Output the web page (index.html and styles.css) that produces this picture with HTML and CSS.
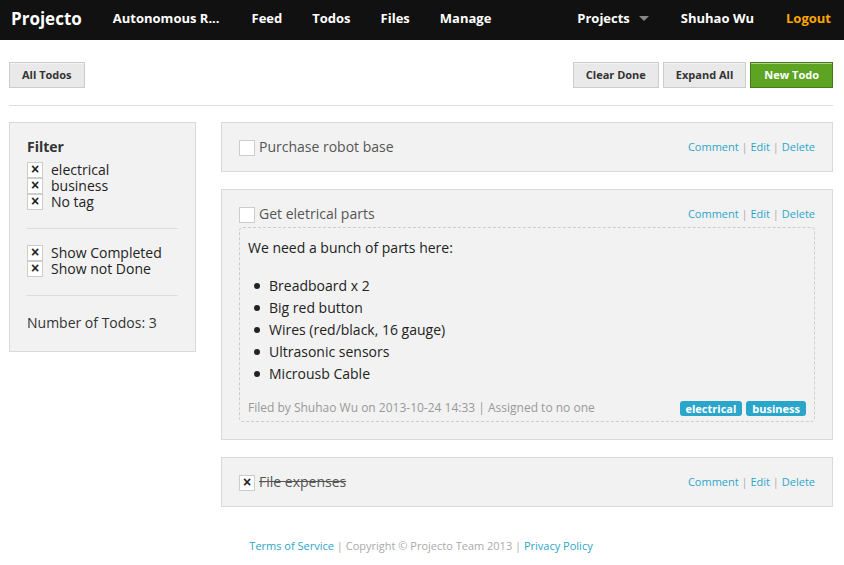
FILE: index.html
```html
<!DOCTYPE html>
<html lang="en">
<head>
<meta charset="utf-8">
<meta name="viewport" content="width=device-width, initial-scale=1">
<title>Projecto</title>
<link rel="stylesheet" href="styles.css">
</head>
<body>
<nav class="topbar">
  <a class="brand" href="#">Projecto</a>
  <a class="nav-link project-name" href="#">Autonomous R...</a>
  <a class="nav-link" href="#">Feed</a>
  <a class="nav-link" href="#">Todos</a>
  <a class="nav-link" href="#">Files</a>
  <a class="nav-link" href="#">Manage</a>
  <div class="nav-right">
    <a class="nav-link has-menu" href="#">Projects</a>
    <a class="nav-link" href="#">Shuhao Wu</a>
    <a class="nav-link logout" href="#">Logout</a>
  </div>
</nav>

<div class="page">
  <div class="toolbar">
    <button class="btn" type="button">All Todos</button>
    <div class="toolbar-actions">
      <button class="btn" type="button">Clear Done</button>
      <button class="btn" type="button">Expand All</button>
      <button class="btn btn-primary" type="button">New Todo</button>
    </div>
  </div>

  <div class="columns">
    <aside class="panel">
      <h2 class="filter-title">Filter</h2>
      <label class="option"><input class="check" type="checkbox" checked>electrical</label>
      <label class="option"><input class="check" type="checkbox" checked>business</label>
      <label class="option"><input class="check" type="checkbox" checked>No tag</label>
      <hr class="rule">
      <label class="option"><input class="check" type="checkbox" checked>Show Completed</label>
      <label class="option"><input class="check" type="checkbox" checked>Show not Done</label>
      <hr class="rule">
      <p class="count">Number of Todos: 3</p>
    </aside>

    <main class="todos">
      <article class="todo">
        <header class="todo-head">
          <label class="todo-title"><input class="check" type="checkbox">Purchase robot base</label>
          <div class="actions"><a href="#">Comment</a> | <a href="#">Edit</a> | <a href="#">Delete</a></div>
        </header>
      </article>

      <article class="todo">
        <header class="todo-head">
          <label class="todo-title"><input class="check" type="checkbox">Get eletrical parts</label>
          <div class="actions"><a href="#">Comment</a> | <a href="#">Edit</a> | <a href="#">Delete</a></div>
        </header>
        <div class="details">
          <p class="intro">We need a bunch of parts here:</p>
          <ul class="parts">
            <li>Breadboard x 2</li>
            <li>Big red button</li>
            <li>Wires (red/black, 16 gauge)</li>
            <li>Ultrasonic sensors</li>
            <li>Microusb Cable</li>
          </ul>
          <footer class="meta">
            <span>Filed by Shuhao Wu on 2013-10-24 14:33 | Assigned to no one</span>
            <div class="tags"><span class="tag">electrical</span><span class="tag">business</span></div>
          </footer>
        </div>
      </article>

      <article class="todo">
        <header class="todo-head">
          <label class="todo-title"><input class="check" type="checkbox" checked><s>File expenses</s></label>
          <div class="actions"><a href="#">Comment</a> | <a href="#">Edit</a> | <a href="#">Delete</a></div>
        </header>
      </article>
    </main>
  </div>

  <footer class="site-footer"><a href="#">Terms of Service</a> | Copyright © Projecto Team 2013 | <a href="#">Privacy Policy</a></footer>
</div>
</body>
</html>
```
FILE: styles.css
```css
* {
  box-sizing: border-box;
}

body {
  margin: 0;
  background: #fff;
  color: #222;
  font-family: "Open Sans", sans-serif;
  font-size: 14px;
}

a {
  color: #2ba6cb;
  text-decoration: none;
}

h2, p, ul {
  margin: 0;
  padding: 0;
}

.topbar {
  display: flex;
  align-items: center;
  height: 40px;
  padding: 0 11px 4px;
  background: #111;
}

.brand {
  margin-right: 16px;
  color: #fff;
  font-size: 17px;
  font-weight: bold;
}

.nav-link {
  padding: 0 15px;
  color: #fff;
  font-size: 13px;
  font-weight: bold;
  white-space: nowrap;
}

.project-name {
  margin-right: 2px;
}

.nav-right {
  display: flex;
  gap: 2px;
  margin-left: auto;
  margin-right: -13px;
}

.has-menu {
  display: flex;
  align-items: center;
  gap: 9px;
}

.has-menu::after {
  content: "";
  border: 5px solid transparent;
  border-top-color: #888;
  border-bottom: 0;
}

.nav-link.logout {
  color: #ffa500;
}

.page {
  padding: 22px 11px 0 9px;
}

.toolbar {
  display: flex;
  justify-content: space-between;
  padding-bottom: 17px;
  border-bottom: 1px solid #ddd;
}

.toolbar-actions {
  display: flex;
  gap: 4px;
}

.btn {
  height: 26px;
  padding: 0 12px 2px;
  border: 1px solid #ccc;
  background: #e9e9e9;
  box-shadow: inset 0 1px 0 rgba(255, 255, 255, 0.5);
  color: #333;
  font-family: inherit;
  font-size: 11px;
  font-weight: bold;
}

.btn-primary {
  padding: 0 13px 2px;
  border-color: #457a1a;
  background: #5da423;
  color: #fff;
}

.columns {
  display: grid;
  grid-template-columns: 187px minmax(0, 1fr);
  gap: 25px;
  align-items: start;
  margin-top: 16px;
}

.panel, .todo {
  border: 1px solid #d9d9d9;
  background: #f2f2f2;
}

.panel {
  padding: 17px;
}

.filter-title {
  margin-bottom: 8px;
  color: #333;
  font-size: 14px;
  line-height: 14px;
}

.option {
  display: flex;
  align-items: center;
  gap: 8px;
  line-height: 16px;
}

.check {
  display: grid;
  place-items: center;
  flex: none;
  width: 16px;
  height: 16px;
  margin: 0;
  border: 1px solid #ccc;
  background: #fff;
  appearance: none;
}

.check:checked::before {
  content: "×";
  color: #222;
  font-size: 14px;
  font-weight: bold;
  line-height: 12px;
  height: 14px;
}

.rule {
  margin: 18px 0 16px;
  border: 0;
  border-top: 1px solid #ddd;
}

.count {
  color: #333;
  line-height: 22px;
}

.todos {
  display: grid;
  gap: 17px;
}

.todo {
  padding: 17px 17px 15px;
}

.todo-head {
  display: flex;
  justify-content: space-between;
}

.todo-title {
  display: flex;
  gap: 4px;
  color: #555;
  line-height: 14px;
}

.actions {
  color: #aaa;
  font-size: 11px;
  line-height: 14px;
}

.details {
  margin: 4px 0 2px;
  padding: 9px 8px 5px;
  border: 1px dashed #ccc;
  border-radius: 4px;
}

.intro {
  line-height: 22px;
}

.parts {
  margin: 16px 0 15px;
  padding-left: 6px;
  list-style: none;
  line-height: 22px;
}

.parts li {
  display: flex;
  align-items: center;
  gap: 9px;
}

.parts li::before {
  content: "";
  width: 6px;
  height: 6px;
  border-radius: 50%;
  background: #222;
}

.meta {
  display: flex;
  align-items: center;
  justify-content: space-between;
  color: #999;
  font-size: 12px;
  line-height: 16px;
}

.tags {
  display: flex;
  gap: 4px;
}

.tag {
  padding: 0 6px;
  border-radius: 3px;
  background: #2ba6cb;
  color: #fff;
  font-size: 11px;
  font-weight: bold;
  line-height: 15px;
}

.site-footer {
  margin: 31px 0 10px;
  color: #aaa;
  font-size: 11px;
  line-height: 16px;
  text-align: center;
}
```
